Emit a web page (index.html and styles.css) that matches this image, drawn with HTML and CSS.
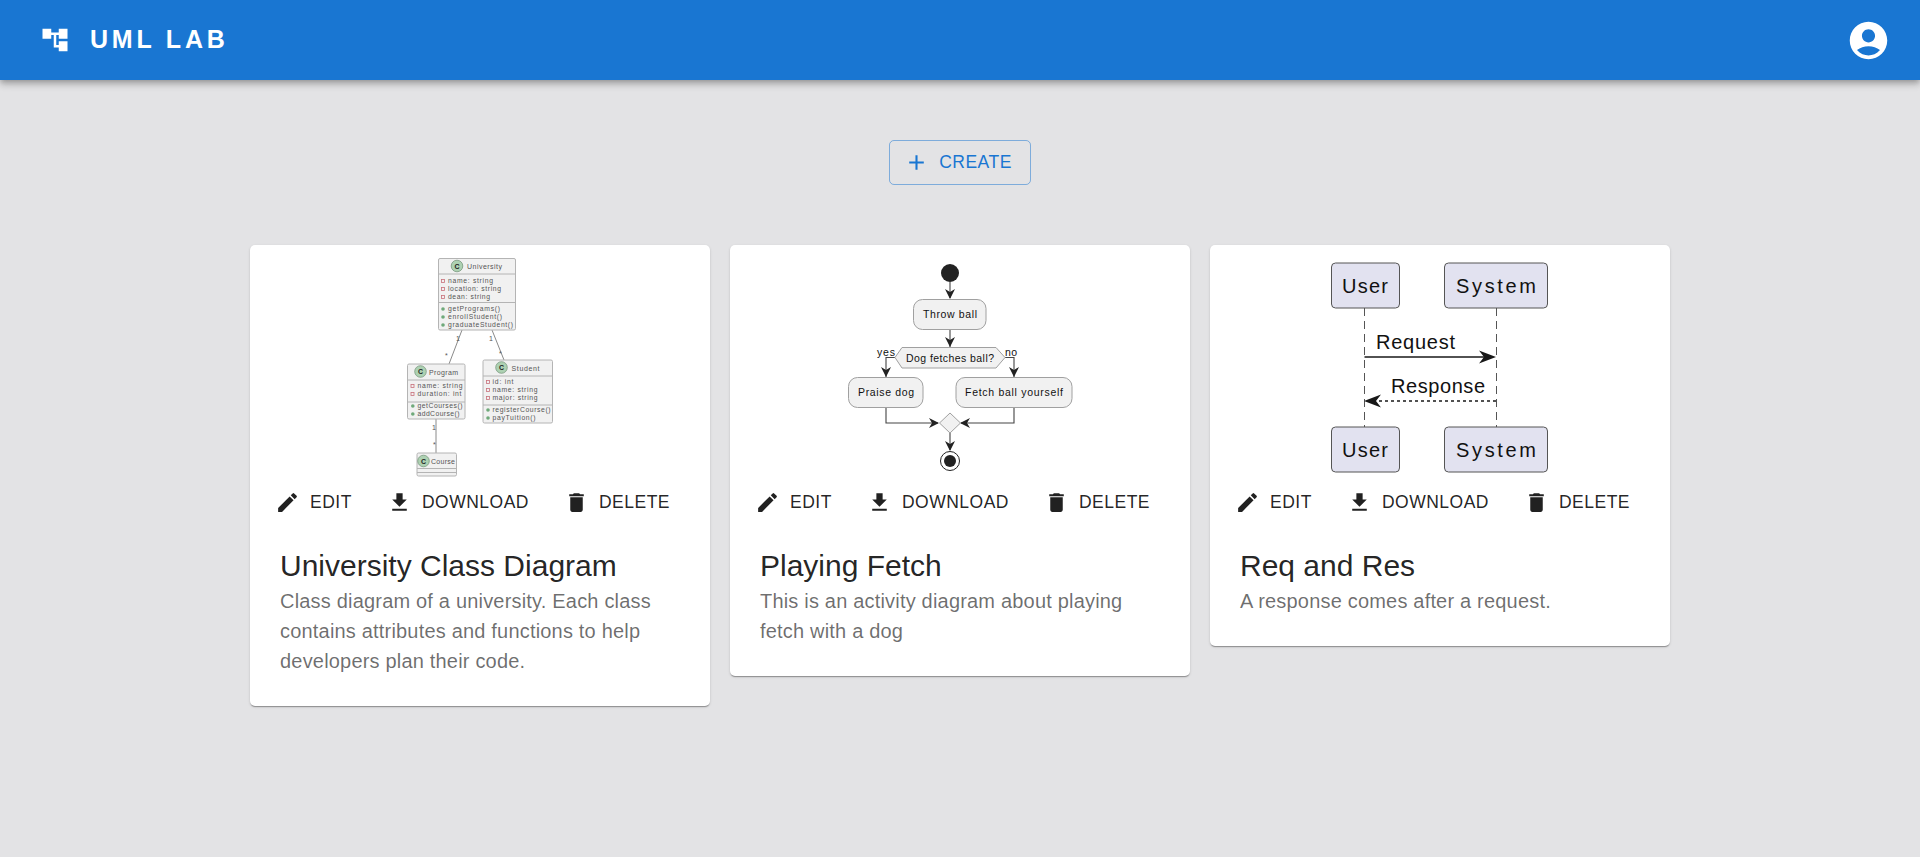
FILE: index.html
```html
<!DOCTYPE html>
<html lang="en">
<head>
<meta charset="utf-8">
<title>UML Lab</title>
<link rel="stylesheet" href="styles.css">
</head>
<body>
<header class="appbar">
  <div class="brand">
    <svg class="logo" viewBox="0 0 24 24"><path d="M22 11V3h-7v3H9V3H2v8h7V8h2v10h4v3h7v-8h-7v3h-2V8h2v3z"/></svg>
    <span class="brand-name">UML LAB</span>
  </div>
  <svg class="avatar" viewBox="0 0 24 24"><path d="M12 2C6.48 2 2 6.48 2 12s4.48 10 10 10 10-4.48 10-10S17.52 2 12 2m0 4c1.93 0 3.5 1.57 3.5 3.5S13.93 13 12 13s-3.5-1.57-3.5-3.5S10.07 6 12 6m0 14c-2.03 0-4.43-.82-6.14-2.88C7.55 15.8 9.68 15 12 15s4.45.8 6.14 2.12C16.43 19.18 14.03 20 12 20"/></svg>
</header>
<main class="main">
  <button class="create"><svg class="icon" viewBox="0 0 24 24"><path d="M19 13h-6v6h-2v-6H5v-2h6V5h2v6h6z"/></svg>Create</button>
  <section class="cards">

    <article class="card">
      <svg class="diagram" viewBox="250 245 460 235">
        <g class="links">
          <path d="M462 330 449 364M492 330 504 360M436 419V453"/>
        </g>
        <text class="lbl" x="456" y="341">1</text><text class="lbl" x="489" y="341">1</text>
        <text class="lbl" x="445" y="358">*</text><text class="lbl" x="499" y="356">*</text>
        <text class="lbl" x="432" y="430">1</text><text class="lbl" x="433" y="447">*</text>

        <rect class="cbox" x="438.5" y="258.5" width="77" height="71.5" rx="1.5"/>
        <path class="cdiv" d="M438.5 274H515.5M438.5 302.500H515.5"/>
        <circle class="cspot" cx="457" cy="266" r="5.800"/><text class="cspot-c" x="457" y="268.500">C</text>
        <text class="ctitle" x="467" y="269" textLength="35">University</text>
        <rect class="priv" x="441.500" y="279.500" width="3" height="3"/><text class="ct" x="448" y="283.500" textLength="45">name: string</text>
        <rect class="priv" x="441.500" y="287.500" width="3" height="3"/><text class="ct" x="448" y="291.500" textLength="53">location: string</text>
        <rect class="priv" x="441.500" y="295.500" width="3" height="3"/><text class="ct" x="448" y="299.500" textLength="42">dean: string</text>
        <circle class="pub" cx="443" cy="309" r="1.800"/><text class="ct" x="448" y="311.500" textLength="52">getPrograms()</text>
        <circle class="pub" cx="443" cy="317" r="1.800"/><text class="ct" x="448" y="319.500" textLength="54">enrollStudent()</text>
        <circle class="pub" cx="443" cy="325" r="1.800"/><text class="ct" x="448" y="327.500" textLength="65">graduateStudent()</text>

        <rect class="cbox" x="407.500" y="364" width="57.500" height="55" rx="1.500"/>
        <path class="cdiv" d="M407.500 380H465M407.500 402H465"/>
        <circle class="cspot" cx="420.500" cy="371.500" r="5.800"/><text class="cspot-c" x="420.500" y="374">C</text>
        <text class="ctitle" x="429" y="375" textLength="29">Program</text>
        <rect class="priv" x="411" y="384.500" width="3" height="3"/><text class="ct" x="417.500" y="388.500" textLength="45">name: string</text>
        <rect class="priv" x="411" y="392.500" width="3" height="3"/><text class="ct" x="417.500" y="396.500" textLength="44">duration: int</text>
        <circle class="pub" cx="412.800" cy="406" r="1.800"/><text class="ct" x="417.500" y="408.500" textLength="45">getCourses()</text>
        <circle class="pub" cx="412.800" cy="414" r="1.800"/><text class="ct" x="417.500" y="416.500" textLength="42">addCourse()</text>

        <rect class="cbox" x="483" y="360" width="69.500" height="63" rx="1.500"/>
        <path class="cdiv" d="M483 376H552.500M483 405H552.500"/>
        <circle class="cspot" cx="501.500" cy="367.500" r="5.800"/><text class="cspot-c" x="501.500" y="370">C</text>
        <text class="ctitle" x="511.500" y="371" textLength="28">Student</text>
        <rect class="priv" x="486.500" y="380.500" width="3" height="3"/><text class="ct" x="492.500" y="384.500" textLength="21">id: int</text>
        <rect class="priv" x="486.500" y="388.500" width="3" height="3"/><text class="ct" x="492.500" y="392.500" textLength="45">name: string</text>
        <rect class="priv" x="486.500" y="396.500" width="3" height="3"/><text class="ct" x="492.500" y="400.500" textLength="45">major: string</text>
        <circle class="pub" cx="488" cy="410" r="1.800"/><text class="ct" x="492.500" y="412.500" textLength="58">registerCourse()</text>
        <circle class="pub" cx="488" cy="418" r="1.800"/><text class="ct" x="492.500" y="420.500" textLength="43">payTuition()</text>

        <rect class="cbox" x="417" y="453" width="39.500" height="23" rx="1.500"/>
        <path class="cdiv" d="M417 468.500H456.500M417 472.500H456.500"/>
        <circle class="cspot" cx="423.500" cy="461" r="5.800"/><text class="cspot-c" x="423.500" y="463.500">C</text>
        <text class="ctitle" x="431" y="464" textLength="24">Course</text>
      </svg>
      <div class="actions">
        <button class="action"><svg class="icon" viewBox="0 0 24 24"><path d="M3 17.250V21h3.750L17.810 9.940l-3.750-3.750L3 17.250zM20.710 7.040c.39-.39.39-1.020 0-1.410l-2.340-2.340a.996.996 0 0 0-1.410 0l-1.830 1.830 3.750 3.750 1.830-1.830z"/></svg>Edit</button>
        <button class="action"><svg class="icon" viewBox="0 0 24 24"><path d="M5 20h14v-2H5v2zm14-11h-4V3H9v6H5l7 7 7-7z"/></svg>Download</button>
        <button class="action"><svg class="icon" viewBox="0 0 24 24"><path d="M6 19c0 1.100.9 2 2 2h8c1.100 0 2-.9 2-2V7H6v12zM19 4h-3.500l-1-1h-5l-1 1H5v2h14V4z"/></svg>Delete</button>
      </div>
      <div class="content">
        <h2 class="title">University Class Diagram</h2>
        <p class="desc">Class diagram of a university. Each class contains attributes and functions to help developers plan their code.</p>
      </div>
    </article>

    <article class="card">
      <svg class="diagram" viewBox="730 245 460 235">
        <circle class="dot" cx="950" cy="273" r="9"/>
        <path class="flow" d="M950 282V298M950 329V347M895 357.500H886V377M1005 357.500H1014V377M886 407V423H938M1014 407V423H961M950 433V450"/>
        <path class="head" d="M950 299 945 289 950 292 955 289zM950 347 945 337 950 340 955 337zM886 377 881 367 886 370 891 367zM1014 377 1009 367 1014 370 1019 367zM939 423 929 418 932 423 929 428zM960 423 970 418 967 423 970 428zM950 451 945 441 950 444 955 441z"/>
        <rect class="step" x="913.500" y="299.500" width="72.500" height="30" rx="9"/>
        <path class="step" d="M902 347.500H996L1005 357.500 996 368H902L895 357.500Z"/>
        <rect class="step" x="848.500" y="377.500" width="74.500" height="30" rx="9"/>
        <rect class="step" x="956" y="377.500" width="116" height="30" rx="9"/>
        <path class="step" d="M950 413 960.500 423 950 433 939.500 423Z"/>
        <circle class="ring" cx="950" cy="461" r="9.500"/><circle class="dot" cx="950" cy="461" r="6"/>
        <text class="at" x="923" y="318" textLength="54">Throw ball</text>
        <text class="at" x="906" y="362" textLength="88">Dog fetches ball?</text>
        <text class="at" x="877" y="356" textLength="18">yes</text>
        <text class="at" x="1005" y="356" textLength="12">no</text>
        <text class="at" x="858" y="396" textLength="56">Praise dog</text>
        <text class="at" x="965" y="396" textLength="98">Fetch ball yourself</text>
      </svg>
      <div class="actions">
        <button class="action"><svg class="icon" viewBox="0 0 24 24"><path d="M3 17.250V21h3.750L17.810 9.940l-3.750-3.750L3 17.250zM20.710 7.040c.39-.39.39-1.020 0-1.410l-2.340-2.340a.996.996 0 0 0-1.410 0l-1.830 1.830 3.750 3.750 1.830-1.830z"/></svg>Edit</button>
        <button class="action"><svg class="icon" viewBox="0 0 24 24"><path d="M5 20h14v-2H5v2zm14-11h-4V3H9v6H5l7 7 7-7z"/></svg>Download</button>
        <button class="action"><svg class="icon" viewBox="0 0 24 24"><path d="M6 19c0 1.100.9 2 2 2h8c1.100 0 2-.9 2-2V7H6v12zM19 4h-3.500l-1-1h-5l-1 1H5v2h14V4z"/></svg>Delete</button>
      </div>
      <div class="content">
        <h2 class="title">Playing Fetch</h2>
        <p class="desc">This is an activity diagram about playing fetch with a dog</p>
      </div>
    </article>

    <article class="card">
      <svg class="diagram" viewBox="1210 245 460 235">
        <path class="life" d="M1364.500 308V427M1496.500 308V427"/>
        <rect class="actor" x="1331.500" y="263" width="68" height="45" rx="4"/>
        <rect class="actor" x="1444.500" y="263" width="103" height="45" rx="4"/>
        <rect class="actor" x="1331.500" y="427" width="68" height="45" rx="4"/>
        <rect class="actor" x="1444.500" y="427" width="103" height="45" rx="4"/>
        <text class="st" x="1342" y="293" textLength="46">User</text>
        <text class="st" x="1456" y="293" textLength="80">System</text>
        <text class="st" x="1342" y="457" textLength="46">User</text>
        <text class="st" x="1456" y="457" textLength="80">System</text>
        <text class="st" x="1376" y="349" textLength="79">Request</text>
        <text class="st" x="1391" y="393" textLength="94">Response</text>
        <path class="msg" d="M1364.500 357H1486"/>
        <path class="msg-dash" d="M1496 401H1376"/>
        <path class="tip" d="M1496 357 1479 350.500 1484 357 1479 363.500zM1364 401 1381 394.500 1376 401 1381 407.500z"/>
      </svg>
      <div class="actions">
        <button class="action"><svg class="icon" viewBox="0 0 24 24"><path d="M3 17.250V21h3.750L17.810 9.940l-3.750-3.750L3 17.250zM20.710 7.040c.39-.39.39-1.020 0-1.410l-2.340-2.340a.996.996 0 0 0-1.410 0l-1.830 1.830 3.750 3.750 1.830-1.830z"/></svg>Edit</button>
        <button class="action"><svg class="icon" viewBox="0 0 24 24"><path d="M5 20h14v-2H5v2zm14-11h-4V3H9v6H5l7 7 7-7z"/></svg>Download</button>
        <button class="action"><svg class="icon" viewBox="0 0 24 24"><path d="M6 19c0 1.100.9 2 2 2h8c1.100 0 2-.9 2-2V7H6v12zM19 4h-3.500l-1-1h-5l-1 1H5v2h14V4z"/></svg>Delete</button>
      </div>
      <div class="content">
        <h2 class="title">Req and Res</h2>
        <p class="desc">A response comes after a request.</p>
      </div>
    </article>

  </section>
</main>
</body>
</html>
```

FILE: styles.css
```css
* { box-sizing: border-box; }

html, body { margin: 0; height: 100%; }

body {
  background: #e3e3e5;
  font-family: "Liberation Sans", Arial, sans-serif;
  color: rgba(0, 0, 0, .87);
  overflow: hidden;
}

.appbar {
  height: 80px;
  background: #1976d2;
  color: #fff;
  display: flex;
  align-items: center;
  justify-content: space-between;
  padding: 0 29px 0 40px;
  box-shadow: 0 2px 5px -1px rgba(0, 0, 0, .2), 0 5px 6px 0 rgba(0, 0, 0, .14), 0 1px 12px 0 rgba(0, 0, 0, .12);
}

.brand { display: flex; align-items: center; }

.logo { width: 30px; height: 30px; fill: #fff; margin-right: 20px; }

.brand-name {
  font-size: 25px;
  font-weight: 700;
  letter-spacing: 3.8px;
  line-height: 40px;
  padding-bottom: 2px;
}

.avatar { width: 45px; height: 45px; fill: #fff; }

.main {
  display: flex;
  flex-direction: column;
  align-items: center;
  padding-top: 60px;
}

.create {
  display: flex;
  align-items: center;
  gap: 10px;
  height: 45px;
  padding: 0 18px 0 14px;
  background: transparent;
  border: 1px solid rgba(25, 118, 210, .5);
  border-radius: 5px;
  color: #1976d2;
  font: 17.5px "Liberation Sans", Arial, sans-serif;
  letter-spacing: .5px;
  text-transform: uppercase;
}

.icon { width: 25px; height: 25px; fill: currentColor; flex: none; }

.cards {
  display: flex;
  align-items: flex-start;
  gap: 20px;
  margin-top: 60px;
}

.card {
  width: 460px;
  background: #fff;
  border-radius: 5px;
  box-shadow: 0 2px 1px -1px rgba(0, 0, 0, .2), 0 1px 1px 0 rgba(0, 0, 0, .14), 0 1px 3px 0 rgba(0, 0, 0, .12);
}

.diagram { display: block; width: 460px; height: 235px; }

.actions { display: flex; gap: 35px; padding-left: 25px; }

.action {
  display: flex;
  align-items: center;
  gap: 10px;
  height: 45px;
  padding: 0;
  background: none;
  border: 0;
  color: rgba(0, 0, 0, .87);
  font: 17.5px "Liberation Sans", Arial, sans-serif;
  letter-spacing: .5px;
  text-transform: uppercase;
}

.content { padding: 21px 30px 30px; }

.title {
  margin: 0;
  font-size: 30px;
  font-weight: 400;
  line-height: 40px;
}

.desc {
  margin: 0;
  font-size: 20px;
  line-height: 30px;
  letter-spacing: .19px;
  color: rgba(0, 0, 0, .58);
}

/* class diagram */
.links path, .links { fill: none; stroke: #8a8a8a; stroke-width: 1; }
.cbox { fill: #f1f1f1; stroke: #b4b4b4; stroke-width: 1; }
.cdiv { fill: none; stroke: #b4b4b4; stroke-width: 1; }
.cspot { fill: #add1b2; stroke: #6f8f74; stroke-width: .7; }
.cspot-c { font-size: 7px; font-weight: 700; text-anchor: middle; fill: #222; }
.ctitle { font-size: 7px; fill: #555; }
.ct { font-size: 6.8px; fill: #555; transform: translateY(-1px); }
.lbl { font-size: 7px; fill: #555; }
.priv { fill: none; stroke: #c8717a; stroke-width: .8; }
.pub { fill: #6fa97a; }

/* activity diagram */
.dot { fill: #222; }
.ring { fill: #fff; stroke: #222; stroke-width: 1; }
.flow { fill: none; stroke: #444; stroke-width: 1.100; }
.head { fill: #222; }
.step { fill: #f1f1f1; stroke: #a0a0a0; stroke-width: 1; }
.at { font-size: 10.500px; fill: #111; }

/* sequence diagram */
.life { fill: none; stroke: #555; stroke-width: 1; stroke-dasharray: 8 5; }
.actor { fill: #e2e2f0; stroke: #555; stroke-width: 1; }
.st { font-size: 20px; fill: #111; }
.msg { fill: none; stroke: #181818; stroke-width: 1.500; }
.msg-dash { fill: none; stroke: #181818; stroke-width: 1.500; stroke-dasharray: 3 3; }
.tip { fill: #181818; }
```
